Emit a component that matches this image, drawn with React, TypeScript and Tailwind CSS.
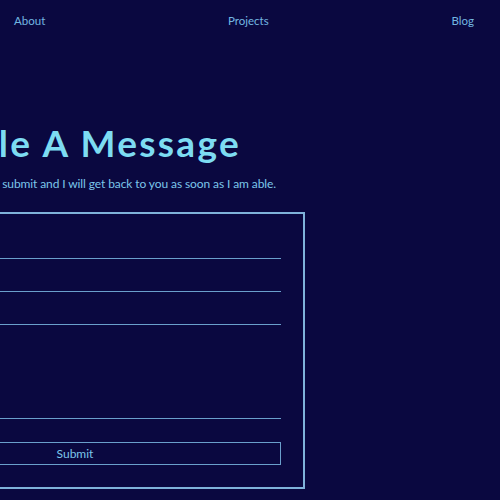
import React from "react";

export default function App() {
  return (
    <div
      className="w-[500px] h-[500px] overflow-hidden bg-[#0a0840]"
      style={{ fontFamily: 'Lato, "Noto Sans", sans-serif' }}
    >
      <nav className="flex justify-between pl-[14px] pr-[26px] pt-[12px] text-[11.5px] leading-[18px] text-[#72b6e0]">
        <a>About</a>
        <a>Projects</a>
        <a>Blog</a>
      </nav>
      <main className="ml-[-400px] w-[705px] mt-[91px]">
        <h1 className="text-right pr-[64px] text-[37px] leading-[44px] font-bold tracking-[2.3px] text-[#7ddcf2] whitespace-nowrap">
          Scribble A Message
        </h1>
        <p className="text-right pr-[29px] mt-[10px] text-[12px] leading-[18px] tracking-[-0.1px] text-[#7cc6ea] whitespace-nowrap">
          Fill out the form below and hit submit and I will get back to you as soon as I am able.
        </p>
        <form className="ml-[245px] mt-[19px] border-2 border-[#7fb2da] px-[22px] pt-[25px] pb-[22px] flex flex-col">
          <input className="h-[20px] border-b border-[#6a9fcc] bg-transparent outline-none" />
          <input className="mt-[13px] h-[20px] border-b border-[#6a9fcc] bg-transparent outline-none" />
          <input className="mt-[13px] h-[20px] border-b border-[#6a9fcc] bg-transparent outline-none" />
          <textarea className="mt-[13px] h-[81px] border-b border-[#6a9fcc] bg-transparent outline-none resize-none" />
          <button
            type="button"
            className="mt-[23px] h-[23px] border border-[#6a9fcc] text-[12px] leading-[18px] text-[#7cc6ea]"
          >
            Submit
          </button>
        </form>
      </main>
    </div>
  );
}
